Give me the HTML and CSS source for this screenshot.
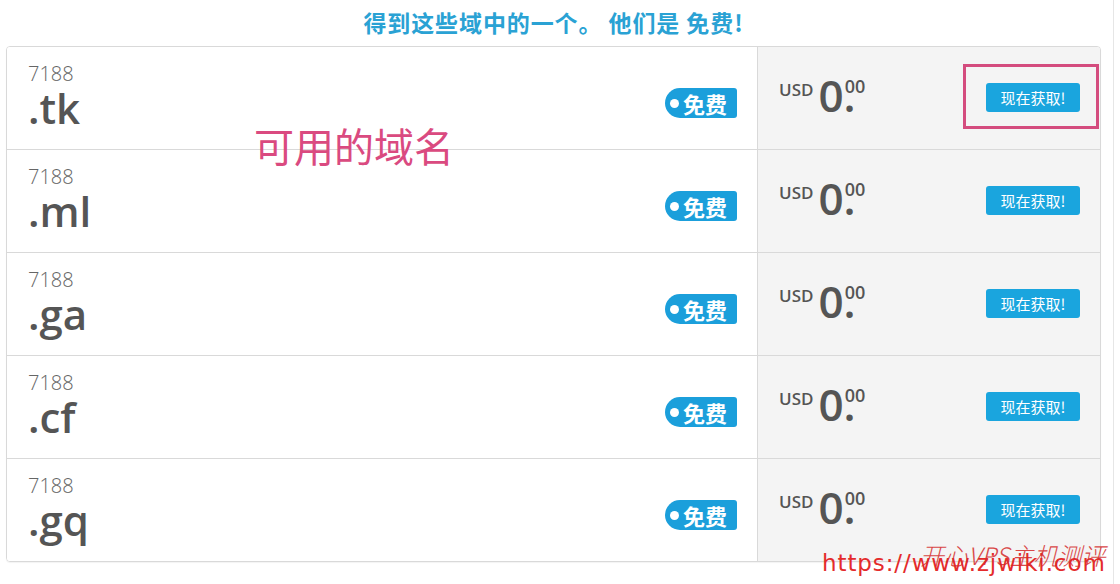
FILE: index.html
```html
<!DOCTYPE html>
<html lang="zh-CN">
<head>
<meta charset="utf-8">
<title>免费域名</title>
<link rel="stylesheet" href="styles.css">
</head>
<body>
<div class="page">
  <h2 class="headline">得到这些域中的一个。 他们是 免费!</h2>
  <div class="domains">
    <div class="row">
      <div class="name-cell">
        <div class="name">
          <div class="sld">7188</div>
          <div class="tld">.tk</div>
        </div>
        <span class="badge"><span class="dot"></span>免费</span>
      </div>
      <div class="price-cell">
        <div class="price"><span class="cur">USD</span><span class="amount">0.</span><span class="cents">00</span></div>
        <a class="btn" href="#">现在获取!</a>
        <span class="highlight"></span>
      </div>
    </div>
    <div class="row">
      <div class="name-cell">
        <div class="name">
          <div class="sld">7188</div>
          <div class="tld">.ml</div>
        </div>
        <span class="badge"><span class="dot"></span>免费</span>
      </div>
      <div class="price-cell">
        <div class="price"><span class="cur">USD</span><span class="amount">0.</span><span class="cents">00</span></div>
        <a class="btn" href="#">现在获取!</a>
      </div>
    </div>
    <div class="row">
      <div class="name-cell">
        <div class="name">
          <div class="sld">7188</div>
          <div class="tld">.ga</div>
        </div>
        <span class="badge"><span class="dot"></span>免费</span>
      </div>
      <div class="price-cell">
        <div class="price"><span class="cur">USD</span><span class="amount">0.</span><span class="cents">00</span></div>
        <a class="btn" href="#">现在获取!</a>
      </div>
    </div>
    <div class="row">
      <div class="name-cell">
        <div class="name">
          <div class="sld">7188</div>
          <div class="tld">.cf</div>
        </div>
        <span class="badge"><span class="dot"></span>免费</span>
      </div>
      <div class="price-cell">
        <div class="price"><span class="cur">USD</span><span class="amount">0.</span><span class="cents">00</span></div>
        <a class="btn" href="#">现在获取!</a>
      </div>
    </div>
    <div class="row">
      <div class="name-cell">
        <div class="name">
          <div class="sld">7188</div>
          <div class="tld">.gq</div>
        </div>
        <span class="badge"><span class="dot"></span>免费</span>
      </div>
      <div class="price-cell">
        <div class="price"><span class="cur">USD</span><span class="amount">0.</span><span class="cents">00</span></div>
        <a class="btn" href="#">现在获取!</a>
      </div>
    </div>
  </div>
  <div class="note">可用的域名</div>
  <div class="watermark">
    <span class="wm-url">https://www.zjwiki.com</span>
    <span class="wm-script">开心VPS主机测评</span>
  </div>
</div>
</body>
</html>
```

FILE: styles.css
```css
* { box-sizing: border-box; }
html, body { margin: 0; padding: 0; background: #fff; }
body {
  font-family: "Open Sans", "Noto Sans CJK SC", sans-serif;
  color: #555;
}
.page {
  position: relative;
  width: 1114px;
  height: 584px;
  border-right: 1px solid #e6e6e6;
  padding-left: 6px;
  overflow: hidden;
}
.headline {
  margin: 0;
  width: 1095px;
  height: 46px;
  padding-top: 6px;
  text-align: center;
  font-family: "Noto Sans CJK SC", sans-serif;
  font-size: 23px;
  line-height: 32px;
  font-weight: 700;
  letter-spacing: 0.9px;
  color: #2aa2d4;
}
.domains {
  width: 1095px;
  border: 1px solid #d9d9d9;
  border-radius: 4px;
  overflow: hidden;
  box-shadow: 0 1px 1px rgba(0,0,0,0.05);
}
.row {
  display: grid;
  grid-template-columns: 750px 1fr;
  height: 103px;
  border-bottom: 1px solid #d9d9d9;
}
.row:last-child { height: 102px; border-bottom: none; }
.name-cell {
  display: flex;
  justify-content: space-between;
  align-items: flex-start;
  padding: 15px 20px 0 21px;
  background: #fff;
}
.sld {
  font-size: 20px;
  line-height: 24px;
  font-weight: 300;
  color: #666;
}
.tld {
  font-size: 42px;
  line-height: 44px;
  font-weight: 600;
  color: #555;
}
.badge {
  display: flex;
  align-items: center;
  margin-top: 26px;
  height: 30px;
  width: 72px;
  padding-left: 5px;
  border-radius: 15px 3px 3px 15px;
  background: #1b9fdb;
  color: #fff;
  font-family: "Noto Sans CJK SC", sans-serif;
  font-weight: 700;
  font-size: 22px;
  line-height: 30px;
  white-space: nowrap;
}
.dot {
  flex: none;
  width: 9px;
  height: 9px;
  border-radius: 50%;
  background: #fff;
  margin-right: 4px;
}
.price-cell {
  position: relative;
  display: flex;
  justify-content: space-between;
  align-items: flex-start;
  padding: 26px 20px 0 21px;
  background: #f4f4f4;
  border-left: 1px solid #d9d9d9;
}
.price {
  display: flex;
  align-items: flex-start;
}
.cur {
  margin-top: 8px;
  margin-right: 5px;
  font-size: 17px;
  line-height: 17px;
  font-weight: 600;
  color: #555;
}
.amount {
  font-size: 44px;
  line-height: 44px;
  font-weight: 600;
  color: #555;
}
.cents {
  margin-top: 4px;
  margin-left: -11px;
  font-size: 18px;
  line-height: 18px;
  font-weight: 600;
  color: #555;
}
.btn {
  display: block;
  margin-top: 10px;
  width: 94px;
  height: 29px;
  border-radius: 3px;
  background: #1aa5de;
  color: #fff;
  text-decoration: none;
  text-align: center;
  font-family: "Noto Sans CJK SC", sans-serif;
  font-size: 15px;
  line-height: 29px;
}
.highlight {
  position: absolute;
  left: 205px;
  top: 17px;
  width: 136px;
  height: 65px;
  border: 3px solid #d44c7e;
}
.note {
  position: absolute;
  left: 254px;
  top: 121px;
  font-family: "Noto Sans CJK SC", sans-serif;
  font-size: 40px;
  line-height: 48px;
  color: #da4a80;
}
.watermark {
  position: absolute;
  left: 822px;
  top: 548px;
  width: 292px;
  height: 36px;
}
.wm-url {
  position: absolute;
  left: 0;
  top: 1px;
  font-family: "DejaVu Sans", sans-serif;
  font-size: 23px;
  line-height: 28px;
  letter-spacing: 0.9px;
  color: #e42b2b;
  white-space: nowrap;
}
.wm-script {
  position: absolute;
  left: 98px;
  top: -8px;
  font-family: "Noto Sans CJK SC", sans-serif;
  font-size: 24px;
  line-height: 30px;
  font-style: italic;
  font-weight: 300;
  color: #d42a2a;
  white-space: nowrap;
  opacity: 0.85;
}
```
